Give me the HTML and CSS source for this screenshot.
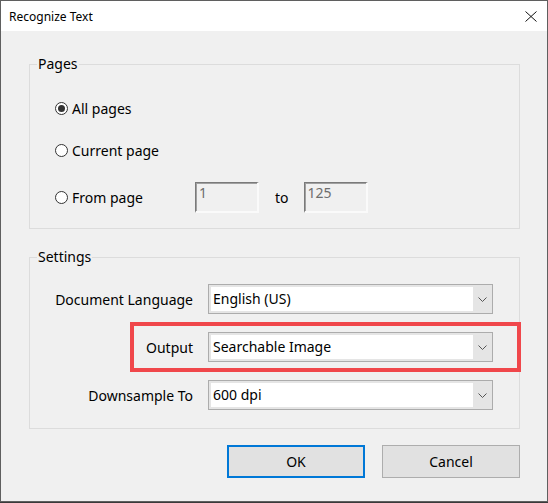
FILE: index.html
```html
<!DOCTYPE html>
<html>
<head>
<meta charset="utf-8">
<link rel="stylesheet" href="styles.css">
</head>
<body>
<div class="window">
  <div class="titlebar">
    <span class="title">Recognize Text</span>
    <span class="close" aria-label="Close">
      <svg width="12" height="11" viewBox="0 0 12 11"><path d="M0.5 0.5 L11.5 10.5 M11.5 0.5 L0.5 10.5" stroke="#111" stroke-width="1" fill="none"/></svg>
    </span>
  </div>
  <div class="content">
    <fieldset class="group pages">
      <legend>Pages</legend>
      <div class="row r1">
        <span class="radio checked"></span><span class="rlabel">All pages</span>
      </div>
      <div class="row r2">
        <span class="radio"></span><span class="rlabel">Current page</span>
      </div>
      <div class="row r3">
        <span class="radio"></span><span class="rlabel wide">From page</span>
        <span class="field">1</span>
        <span class="to">to</span>
        <span class="field">125</span>
      </div>
    </fieldset>
    <fieldset class="group settings">
      <legend>Settings</legend>
      <div class="srow s1">
        <span class="slabel">Document Language</span>
        <div class="select"><span class="val">English (US)</span><span class="arrow"><svg width="9" height="5" viewBox="0 0 9 5"><path d="M0.5 0.5 L4.5 4.5 L8.5 0.5" stroke="#555" fill="none"/></svg></span></div>
      </div>
      <div class="srow s2">
        <span class="slabel">Output</span>
        <div class="select"><span class="val">Searchable Image</span><span class="arrow"><svg width="9" height="5" viewBox="0 0 9 5"><path d="M0.5 0.5 L4.5 4.5 L8.5 0.5" stroke="#555" fill="none"/></svg></span></div>
        <div class="highlight"></div>
      </div>
      <div class="srow s3">
        <span class="slabel">Downsample To</span>
        <div class="select"><span class="val">600 dpi</span><span class="arrow"><svg width="9" height="5" viewBox="0 0 9 5"><path d="M0.5 0.5 L4.5 4.5 L8.5 0.5" stroke="#555" fill="none"/></svg></span></div>
      </div>
    </fieldset>
    <div class="buttons">
      <button class="btn default">OK</button>
      <button class="btn">Cancel</button>
    </div>
  </div>
</div>
</body>
</html>
```
FILE: styles.css
```css
html, body {
  margin: 0;
  padding: 0;
  background: #3a3a3a;
}
body {
  width: 548px;
  height: 503px;
  overflow: hidden;
  font-family: "Segoe UI", "Noto Sans", sans-serif;
  color: #000;
}
.window {
  width: 546px;
  height: 500px;
  border: 1px solid #5f5f5f;
  background: #f0f0f0;
  display: flex;
  flex-direction: column;
}
.titlebar {
  height: 30px;
  background: #fff;
  display: flex;
  align-items: center;
  justify-content: space-between;
  padding: 0 9px 0 8px;
}
.title {
  font-size: 12px;
  color: #000;
}
.close {
  display: flex;
  align-items: center;
  margin-right: 1px;
}
.content {
  padding: 23px 27px 0 28px;
  font-size: 14px;
}
.group {
  margin: 0;
  padding: 0 0 0 25px;
  border: 1px solid #dcdcdc;
  min-width: 0;
}
.group legend {
  padding: 0 1px;
  margin-left: -18px;
  line-height: 20px;
  font-size: 14px;
}
.row {
  display: flex;
  align-items: center;
  height: 22px;
}
.r1 { margin-top: 23px; }
.r2 { margin-top: 20px; }
.r3 { margin-top: 20px; height: 32px; margin-bottom: 15px; }
.radio {
  width: 11px;
  height: 11px;
  border: 1px solid #333;
  border-radius: 50%;
  background: #fff;
  position: relative;
  flex: none;
}
.radio.checked::after {
  content: "";
  position: absolute;
  left: 2px;
  top: 2px;
  width: 7px;
  height: 7px;
  border-radius: 50%;
  background: #333;
}
.rlabel {
  margin-left: 4px;
}
.rlabel.wide {
  width: 123px;
}
.field {
  height: 28px;
  border-style: solid;
  border-width: 1px 2px 2px 1px;
  border-color: #7a7a7a #fafafa #fafafa #7a7a7a;
  box-shadow: inset 1px 1px 0 #a0a0a0;
  color: #6d6d6d;
  padding-left: 3px;
  line-height: 20px;
  box-sizing: content-box;
  width: 58px;
}
.to {
  margin: 0 15px 0 16px;
}
.settings {
  margin-top: 18px;
  padding: 0 0 18px 0;
}
.settings legend { margin-left: 7px; }
.srow {
  display: grid;
  grid-template-columns: 163px 285px;
  column-gap: 15px;
  align-items: center;
  position: relative;
}
.s1 { margin-top: 17px; }
.s2 { margin-top: 18px; }
.s3 { margin-top: 18px; }
.slabel {
  text-align: right;
}
.select {
  border: 1px solid #acacac;
  background: #e5e5e5;
  display: flex;
  align-items: stretch;
  padding: 2px 0 2px 2px;
  box-sizing: border-box;
  height: 30px;
}
.select .val {
  flex: 1;
  background: #fff;
  padding-left: 2px;
  line-height: 24px;
}
.select .arrow {
  width: 19px;
  display: flex;
  align-items: center;
  justify-content: center;
}
.highlight {
  position: absolute;
  left: 100px;
  top: -10px;
  width: 383px;
  height: 42px;
  border: 4px solid #f0474b;
}
.buttons {
  display: flex;
  justify-content: flex-end;
  gap: 17px;
  margin-top: 16px;
}
.btn {
  font-family: inherit;
  font-size: 14px;
  width: 138px;
  height: 33px;
  background: #e1e1e1;
  border: 1px solid #adadad;
  color: #000;
  padding: 0;
  margin: 0;
}
.btn.default {
  border: 2px solid #0078d7;
}
```
